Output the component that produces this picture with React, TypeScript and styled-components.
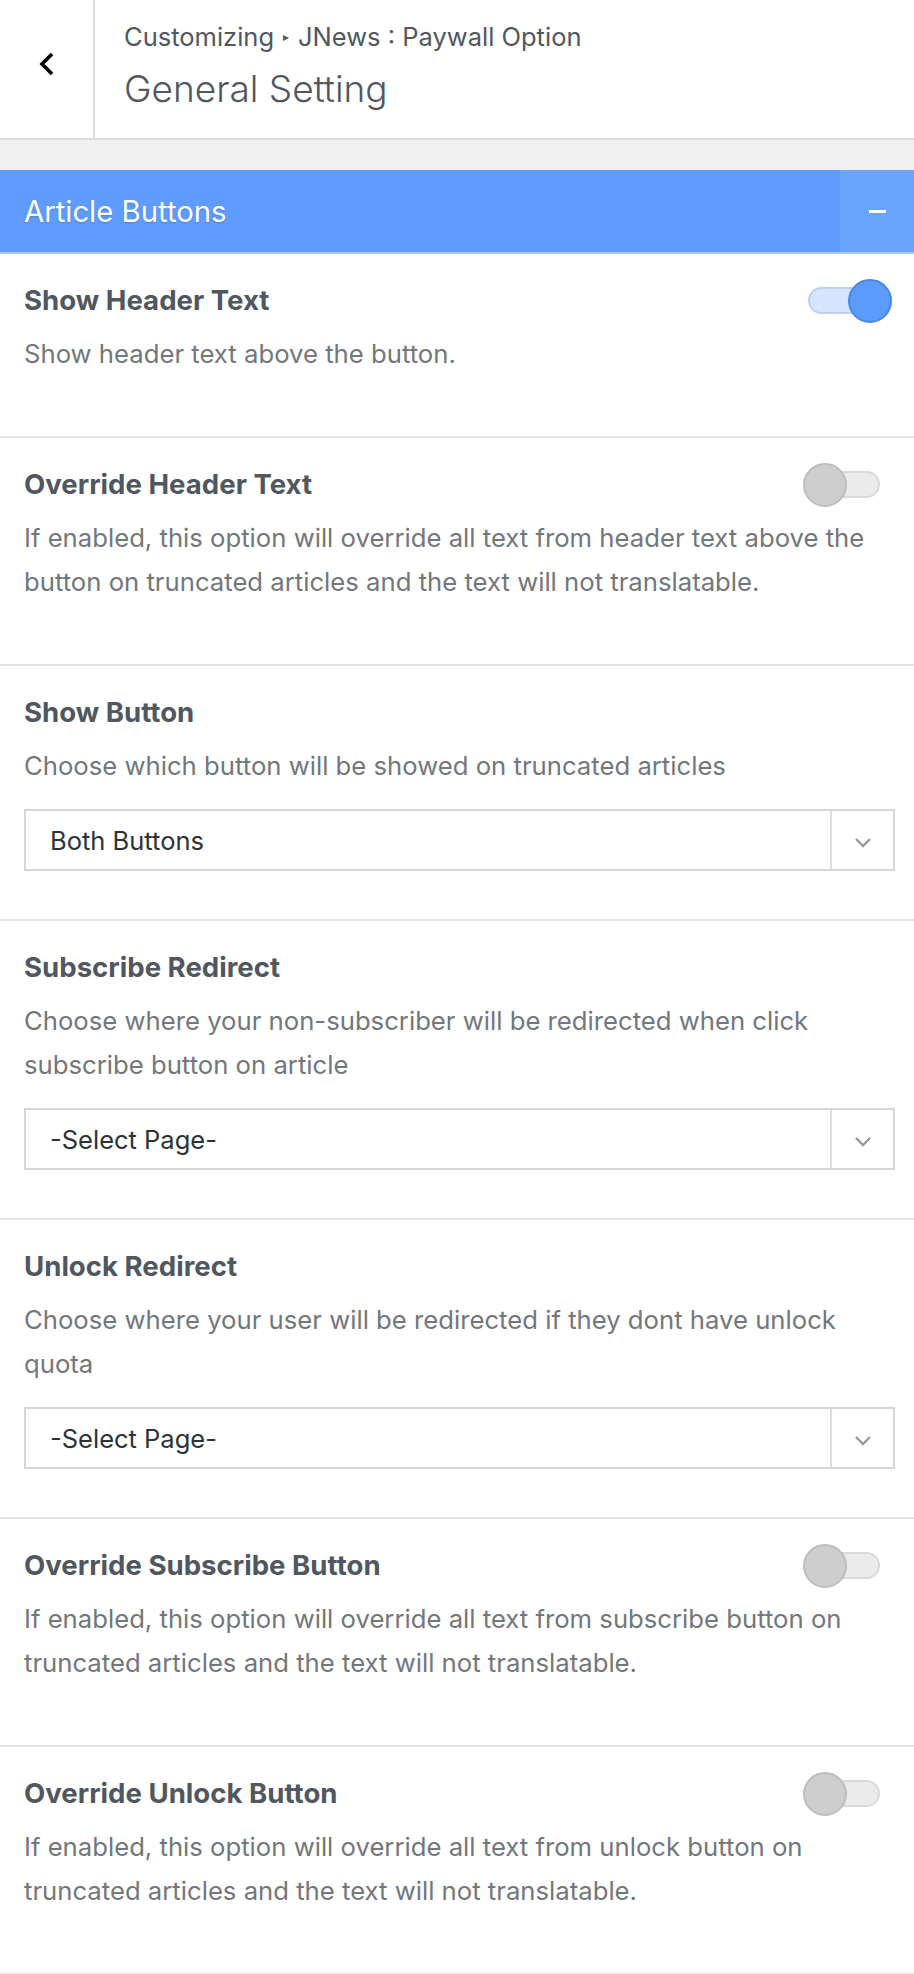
import React from 'react';
import styled, { createGlobalStyle } from 'styled-components';

const GlobalStyle = createGlobalStyle`
  html, body {
    margin: 0;
    padding: 0;
    background: #ffffff;
  }
  body {
    font-family: Inter, "Noto Sans", "Liberation Sans", sans-serif;
    -webkit-font-smoothing: antialiased;
  }
  * {
    box-sizing: border-box;
  }
`;

const Panel = styled.div`
  width: 914px;
  background: #fff;
`;

const Header = styled.div`
  display: flex;
  height: 140px;
  border-bottom: 2px solid #dcdcde;
`;

const BackButton = styled.button`
  width: 95px;
  flex: none;
  display: flex;
  align-items: center;
  justify-content: center;
  padding: 0 0 10px;
  border: 0;
  border-right: 2px solid #dcdcde;
  background: #fff;
  cursor: pointer;
`;

const TitleBlock = styled.div`
  display: flex;
  flex-direction: column;
  padding: 18px 0 0 29px;
`;

const Crumb = styled.div`
  font-size: 25.5px;
  line-height: 38px;
  color: #50575e;
  display: flex;
  align-items: center;
  gap: 9px;
`;

const Arrow = styled.span`
  font-size: 12px;
  color: #50575e;
`;

const PageTitle = styled.h1`
  margin: 10px 0 0;
  font-size: 37px;
  line-height: 46px;
  font-weight: 300;
  color: #50575e;
`;

const Gap = styled.div`
  height: 30px;
  background: #f0f0f1;
`;

const SectionBar = styled.div`
  display: flex;
  height: 84px;
  background: #5f9cfd;
  border-bottom: 2px solid #a9c8f6;
`;

const SectionTitle = styled.div`
  flex: 1;
  display: flex;
  align-items: center;
  padding-left: 24px;
  font-size: 29.3px;
  color: #fff;
  text-shadow: 0 1px 2px rgba(0, 0, 0, 0.18);
`;

const Collapse = styled.button`
  width: 74px;
  flex: none;
  border: 0;
  background: #6aa4fd;
  display: flex;
  align-items: center;
  justify-content: center;
  cursor: pointer;
`;

const Minus = styled.span`
  width: 17px;
  height: 3px;
  background: #fff;
`;

const Control = styled.div<{ $select?: boolean }>`
  padding: 29px 19px ${(p) => (p.$select ? 48 : 60)}px 24px;
  border-bottom: 2px solid #e2e4e7;
`;

const Row = styled.div`
  display: flex;
  align-items: center;
  justify-content: space-between;
  height: 34px;
`;

const Label = styled.div`
  font-size: 27.6px;
  font-weight: 700;
  color: #50575e;
`;

const Description = styled.div`
  margin-top: 15px;
  font-size: 25.7px;
  line-height: 44px;
  color: #72777c;
`;

const Toggle = styled.span<{ $on?: boolean }>`
  position: relative;
  display: block;
  width: 72px;
  height: 27px;
  margin-right: 15px;
  border-radius: 14px;
  background: ${(p) => (p.$on ? '#d6e4fd' : '#ebebeb')};
  border: 2px solid ${(p) => (p.$on ? '#bcd0f0' : '#dadada')};
`;

const Knob = styled.span<{ $on?: boolean }>`
  position: absolute;
  top: -10px;
  left: ${(p) => (p.$on ? '38px' : '-7px')};
  width: 44px;
  height: 44px;
  border-radius: 50%;
  background: ${(p) => (p.$on ? '#5b9bfc' : '#cecece')};
  border: 2px solid ${(p) => (p.$on ? '#4a86e8' : '#bdbdbd')};
`;

const Select = styled.div`
  display: flex;
  height: 62px;
  margin-top: 21px;
  border: 2px solid #d6d6d6;
`;

const SelectValue = styled.div`
  flex: 1;
  display: flex;
  align-items: center;
  padding-left: 24px;
  font-size: 25.5px;
  color: #2c3338;
`;

const SelectArrow = styled.div`
  width: 63px;
  flex: none;
  display: flex;
  align-items: center;
  justify-content: center;
  padding-top: 6px;
  border-left: 2px solid #dddddd;
`;

type Item =
  | { kind: 'toggle'; label: string; desc: string; on?: boolean }
  | { kind: 'select'; label: string; desc: string; value: string };

const items: Item[] = [
  { kind: 'toggle', label: 'Show Header Text', desc: 'Show header text above the button.', on: true },
  {
    kind: 'toggle',
    label: 'Override Header Text',
    desc: 'If enabled, this option will override all text from header text above the button on truncated articles and the text will not translatable.',
  },
  {
    kind: 'select',
    label: 'Show Button',
    desc: 'Choose which button will be showed on truncated articles',
    value: 'Both Buttons',
  },
  {
    kind: 'select',
    label: 'Subscribe Redirect',
    desc: 'Choose where your non-subscriber will be redirected when click subscribe button on article',
    value: '-Select Page-',
  },
  {
    kind: 'select',
    label: 'Unlock Redirect',
    desc: 'Choose where your user will be redirected if they dont have unlock quota',
    value: '-Select Page-',
  },
  {
    kind: 'toggle',
    label: 'Override Subscribe Button',
    desc: 'If enabled, this option will override all text from subscribe button on truncated articles and the text will not translatable.',
  },
  {
    kind: 'toggle',
    label: 'Override Unlock Button',
    desc: 'If enabled, this option will override all text from unlock button on truncated articles and the text will not translatable.',
  },
];

export default function App() {
  return (
    <Panel>
      <GlobalStyle />
      <Header>
        <BackButton aria-label='Back'>
          <svg width='24' height='28' viewBox='0 0 24 28'>
            <polyline points='17,4 7,14 17,24' fill='none' stroke='#000' strokeWidth='3.6' />
          </svg>
        </BackButton>
        <TitleBlock>
          <Crumb>
            Customizing <Arrow>▸</Arrow> JNews : Paywall Option
          </Crumb>
          <PageTitle>General Setting</PageTitle>
        </TitleBlock>
      </Header>
      <Gap />
      <SectionBar>
        <SectionTitle>Article Buttons</SectionTitle>
        <Collapse aria-label='Collapse'>
          <Minus />
        </Collapse>
      </SectionBar>
      {items.map((item) => (
        <Control key={item.label} $select={item.kind === 'select'}>
          <Row>
            <Label>{item.label}</Label>
            {item.kind === 'toggle' && (
              <Toggle $on={item.on}>
                <Knob $on={item.on} />
              </Toggle>
            )}
          </Row>
          <Description>{item.desc}</Description>
          {item.kind === 'select' && (
            <Select>
              <SelectValue>{item.value}</SelectValue>
              <SelectArrow>
                <svg width='18' height='12' viewBox='0 0 18 12'>
                  <polyline points='2,2 9,9 16,2' fill='none' stroke='#999' strokeWidth='2.4' />
                </svg>
              </SelectArrow>
            </Select>
          )}
        </Control>
      ))}
    </Panel>
  );
}
